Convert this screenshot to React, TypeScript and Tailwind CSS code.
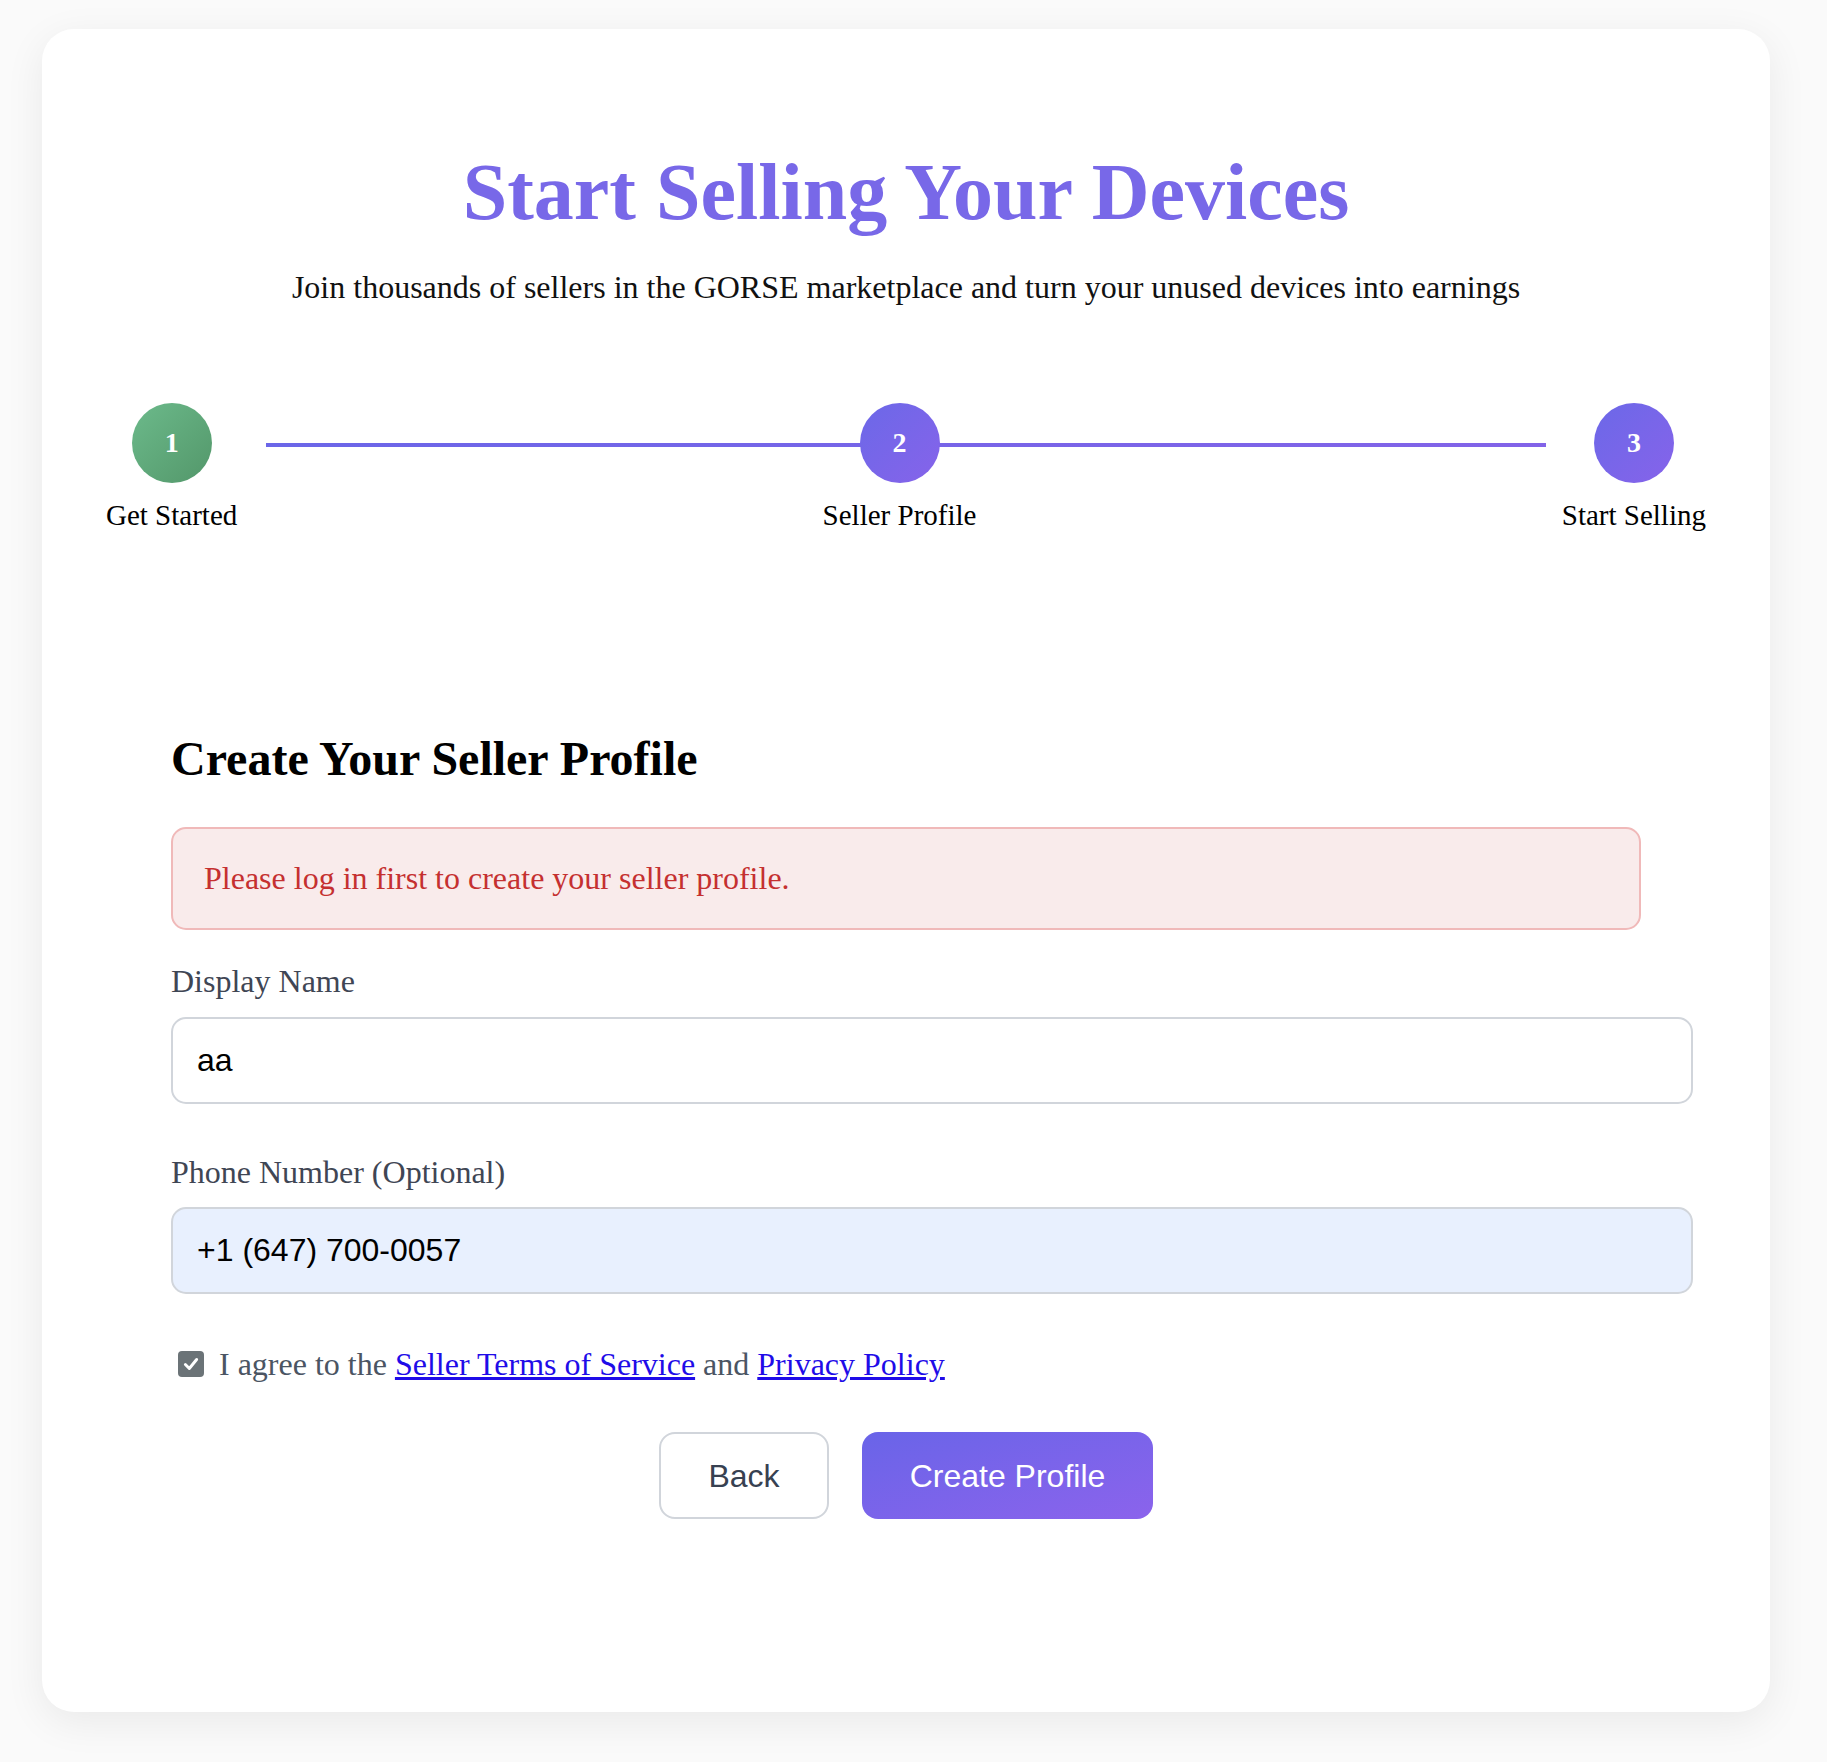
import React from "react";

const serif = "font-['Liberation_Serif','Times_New_Roman',serif]";
const sans = "font-['Liberation_Sans',Arial,sans-serif]";

function Step({ n, label, green }: { n: string; label: string; green?: boolean }) {
  return (
    <div className="relative z-10 flex flex-col items-center">
      <div
        className={
          "flex h-[80px] w-[80px] items-center justify-center rounded-full text-[28px] font-bold text-white " +
          (green
            ? "bg-linear-to-br from-[#6cba8b] to-[#53976a]"
            : "bg-linear-to-br from-[#6b68e8] to-[#8663ea]")
        }
      >
        {n}
      </div>
      <div className="mt-[11px] text-[29px] leading-[42px] text-black">{label}</div>
    </div>
  );
}

export default function App() {
  return (
    <div className={"min-h-[1762px] bg-[#fafafa] pt-[29px] pb-[50px] " + serif}>
      <div className="ml-[42px] h-[1683px] w-[1728px] rounded-[32px] bg-white px-[64px] pt-[115px] shadow-[0_10px_40px_rgba(0,0,0,0.07)]">
        <h1 className="text-center text-[80px] leading-[96px] font-bold text-[#7868e8]">
          Start Selling Your Devices
        </h1>
        <p className="mt-[23px] text-center text-[32px] leading-[48px] text-[#111111]">
          Join thousands of sellers in the GORSE marketplace and turn your unused devices into earnings
        </p>

        <div className="relative mt-[92px] flex justify-between">
          <div className="absolute top-[40px] right-[10%] left-[10%] h-[4px] bg-linear-to-r from-[#6b66e8] to-[#8263e8]" />
          <Step n="1" label="Get Started" green />
          <Step n="2" label="Seller Profile" />
          <Step n="3" label="Start Selling" />
        </div>

        <div className="mx-auto mt-[194px] w-[1470px]">
          <h2 className="text-[48px] leading-[58px] font-bold text-black">Create Your Seller Profile</h2>

          <div className="mt-[39px] rounded-[15px] border-2 border-[#f0b9b9] bg-[#f9ebeb] px-[31px] py-[25px] text-[32px] leading-[49px] text-[#c53030]">
            Please log in first to create your seller profile.
          </div>

          <label className="mt-[27px] block text-[32px] leading-[48px] text-[#3f4654]">Display Name</label>
          <input
            readOnly
            value="aa"
            className={
              "mt-[12px] block h-[87px] w-[1522px] rounded-[15px] border-2 border-[#d1d5db] bg-white px-[24px] text-[32px] text-black outline-none " +
              sans
            }
          />

          <label className="mt-[44px] block text-[32px] leading-[48px] text-[#3f4654]">Phone Number (Optional)</label>
          <input
            readOnly
            value="+1 (647) 700-0057"
            className={
              "mt-[11px] block h-[87px] w-[1522px] rounded-[15px] border-2 border-[#d1d5db] bg-[#e8f0fe] px-[24px] text-[32px] text-black outline-none " +
              sans
            }
          />

          <div className="mt-[46px] flex h-[48px] items-center text-[32px] leading-[48px] text-[#4b5563]">
            <span className="ml-[7px] flex h-[26px] w-[26px] items-center justify-center rounded-[4px] bg-[#6b7377]">
              <svg width="18" height="18" viewBox="0 0 16 16" fill="none">
                <path d="M3 8.5 L6.5 12 L13 4" stroke="white" strokeWidth="2.6" strokeLinecap="round" strokeLinejoin="round" />
              </svg>
            </span>
            <span className="ml-[15px]">
              I agree to the{" "}
              <a href="#" className="text-[#1f0ce8] underline">
                Seller Terms of Service
              </a>{" "}
              and{" "}
              <a href="#" className="text-[#1f0ce8] underline">
                Privacy Policy
              </a>
            </span>
          </div>

          <div className={"mt-[44px] flex justify-center gap-[33px] " + sans}>
            <button className="h-[87px] w-[170px] rounded-[16px] border-2 border-[#d1d5db] bg-white text-[32px] text-[#374151]">
              Back
            </button>
            <button className="h-[87px] w-[291px] rounded-[16px] bg-linear-to-br from-[#6964e8] to-[#8b63ec] text-[32px] text-white">
              Create Profile
            </button>
          </div>
        </div>
      </div>
    </div>
  );
}
